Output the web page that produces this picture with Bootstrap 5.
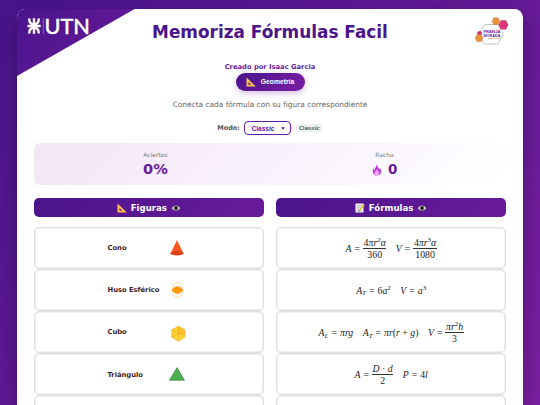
<!DOCTYPE html>
<html lang="es">
<head>
    <meta charset="UTF-8">
    <meta name="viewport" content="width=device-width, initial-scale=1.0">
    <title>Memoriza Fórmulas Facil</title>
    <link href="https://cdn.jsdelivr.net/npm/bootstrap@5.3.0/dist/css/bootstrap.min.css" rel="stylesheet">
    <style>
        body {
            height: 100vh;
            background: linear-gradient(135deg, #4a148c 0%, #7b1fa2 100%);
            font-family: "DejaVu Sans", Verdana, sans-serif;
            font-size: 7px;
            line-height: 1.2;
            color: #333;
        }
        svg { display: block; flex: none; overflow: visible; }
        .game-panel {
            width: 506px;
            height: calc(100vh - 8.5px);
            margin: 8.5px auto 0;
            padding: 0 17px;
            background: white;
            border-radius: 8.5px 8.5px 0 0;
            box-shadow: 0 8px 25px rgba(0,0,0,0.3);
        }
        .corner {
            width: 118.5px;
            height: 67.5px;
            background: linear-gradient(135deg, #4a148c, #6a1b9a);
            clip-path: polygon(0 0, 100% 0, 0 100%);
        }
        .utn-logo { left: 10px; top: 8.5px; }
        .franja-logo { right: 12.5px; top: 8px; }
        .game-title {
            font-size: 16.9px;
            line-height: 20px;
            padding-top: 13.5px;
            color: #4a148c;
        }
        .author { font-size: 6.75px; line-height: 8px; margin-top: 20.5px; color: #6a1b9a; }
        .btn-topic {
            width: 69px;
            height: 18px;
            margin-top: 2px;
            gap: 5px;
            border-radius: 10px;
            background: linear-gradient(135deg, #4a148c, #7b1fa2);
            box-shadow: 0 2px 6px rgba(106,27,154,0.3);
            font: bold 6.75px "Liberation Sans", Arial, sans-serif;
            color: white;
        }
        .intro { font-size: 7.42px; line-height: 9px; margin-top: 9.5px; color: #666; }
        .mode-row { height: 14px; margin-top: 12px; gap: 4.5px; font-size: 6.5px; color: #555; }
        .mode-row > span:first-child { padding-top: 1px; }
        .mode-select {
            width: 47px;
            height: 14px;
            padding: 0 5px 0 6px;
            border: 1px solid #6a1b9a;
            border-radius: 4px;
            font: bold 6.6px "Liberation Sans", Arial, sans-serif;
            color: #6a1b9a;
        }
        .mode-tag { padding: 1px 3px; border-radius: 4px; background: #f0f0f0; font-size: 5.4px; line-height: 6px; color: #666; }
        .stats {
            height: 42px;
            margin-top: 7.5px;
            padding: 0 7px;
            border-radius: 6px;
            background: linear-gradient(135deg, #f3e5f5 0%, #f9f2fd 50%, #ffffff 100%);
        }
        .stat { flex: 1 1 0; }
        .stat-name { font-size: 6px; line-height: 8px; margin-top: 8.5px; color: #777; }
        .stat-value { font-size: 13.5px; line-height: 17px; margin-top: 2px; gap: 6.5px; color: #6a1b9a; }
        .stat-percent { font-size: 14.6px; line-height: 16px; }
        .boards { display: grid; grid-template-columns: 1fr 1fr; gap: 12.6px; margin-top: 13px; }
        .board-head {
            height: 19.5px;
            gap: 4px;
            margin-bottom: 9.5px;
            padding-top: 1px;
            border-radius: 5px;
            background: linear-gradient(135deg, #4a148c, #6a1b9a);
            font-size: 8.6px;
            color: white;
        }
        .tile {
            height: 42px;
            margin-bottom: 0.2px;
            border: 1px solid #e0e0e0;
            box-shadow: inset 0 0 0 0.5px #e0e0e0;
            border-radius: 5px;
        }
        .tile-figure { padding-left: 72.5px; font-size: 6.75px; font-weight: bold; color: #3e1a1a; }
        .tile-figure > span { width: 58.3px; padding-top: 1px; white-space: nowrap; }
        .tile-figure > svg { width: 22px; height: 22px; }
        .math {
            gap: 9.4px;
            padding-top: 1px;
            font: italic 9.8px "Liberation Serif", "Times New Roman", serif;
            color: #222;
        }
        .math i, .math b { font-weight: normal; font-style: normal; }
        .math b { padding: 0 3px; }
        .math sup, .math sub { font-size: 7px; line-height: 0; }
        .math sup { top: -0.5em; font-style: normal; }
        .eq { display: flex; align-items: center; white-space: nowrap; }
        .frac { display: inline-flex; flex-direction: column; align-items: center; line-height: 11px; }
        .frac > span { padding: 0 0.6px; }
        .frac > span:first-child { border-bottom: 0.6px solid #333; }
    </style>
</head>
<body class="overflow-hidden">
    <main class="game-panel position-relative overflow-hidden">
        <div class="corner position-absolute top-0 start-0"></div>

        <div class="utn-logo position-absolute d-flex align-items-center">
            <svg width="70" height="22" viewBox="0 0 70 22">
                <g fill="none" stroke="#fff" stroke-width="2.4">
                    <path d="M7 1.2V16.8M.5 9H13.7"/>
                    <path d="M2.2 1.5c0 4 2.1 5.7 4.8 5.7s4.8-1.7 4.8-5.7M2.2 16.5c0-4 2.1-5.7 4.8-5.7s4.8 1.7 4.8 5.7"/>
                </g>
                <path d="M16.3 1V17" stroke="#c9afe0" stroke-width=".5"/>
                <text x="17.5" y="16.6" textLength="45.5" lengthAdjust="spacingAndGlyphs" font-family="Lato, sans-serif" font-size="21.5" fill="#fff" stroke="#fff" stroke-width=".5">UTN</text>
            </svg>
        </div>

        <div class="franja-logo position-absolute">
            <svg width="36" height="29" viewBox="0 0 36 29">
                <path d="M9.5 7.5H23L28.3 17.2L23 27H9.5L4 17.2Z" fill="#fff" stroke="#aaa" stroke-width=".7"/>
                <path d="M19 .7H23L25 4.2L23 7.8H19L17 4.2Z" fill="#eb9338" stroke="#a86b56" stroke-width=".4"/>
                <path d="M26 3.3H31L33.4 7.9L31 12.4H26L23.4 7.9Z" fill="#df3478"/>
                <path d="M3.2 14.2H6L7.4 16.2L6 18.2H3.2L2 16.2Z" fill="#d92b73"/>
                <path d="M2 17.5H6L8 21L6 24.6H2L.2 21Z" fill="#eb9338" stroke="#a86b56" stroke-width=".4"/>
                <g font-family="Liberation Sans, sans-serif" font-weight="bold" font-size="3.6" fill="#6a1b9a">
                    <text x="8.5" y="16.1" textLength="17" lengthAdjust="spacingAndGlyphs">FRANJA</text>
                    <text x="8.5" y="19.6" textLength="17" lengthAdjust="spacingAndGlyphs">MORADA</text>
                </g>
                <path d="M13 21.3H25" stroke="#f0a866" stroke-width=".8"/>
            </svg>
        </div>

        <h1 class="game-title fw-bold text-center mb-0">Memoriza Fórmulas Facil</h1>
        <div class="author fw-bold text-center">Creado por Isaac Garcia</div>
        <button type="button" class="btn-topic d-flex align-items-center justify-content-center border-0 mx-auto p-0">
            <svg width="10" height="10" viewBox="0 0 10 10"><path d="M.5.5V9.5H9.8ZM2.5 5L5.2 7.7H2.5Z" fill="#f9c04c" fill-rule="evenodd"/></svg>
            Geometría
        </button>
        <p class="intro text-center mb-0">Conecta cada fórmula con su figura correspondiente</p>

        <div class="mode-row d-flex align-items-center justify-content-center">
            <span class="fw-bold">Modo:</span>
            <div class="mode-select d-flex align-items-center justify-content-between">
                Classic
                <svg width="4" height="3" viewBox="0 0 4 3"><path d="M0 .3H4L2 2.8Z" fill="#6a1b9a"/></svg>
            </div>
            <span class="mode-tag fw-bold">Classic</span>
        </div>

        <section class="stats d-flex text-center">
            <div class="stat">
                <div class="stat-name">Aciertos</div>
                <div class="stat-value stat-percent fw-bold">0%</div>
            </div>
            <div class="stat">
                <div class="stat-name">Racha</div>
                <div class="stat-value fw-bold d-flex align-items-center justify-content-center">
                    <svg width="10" height="12" viewBox="0 0 10 12"><path d="M4.5 0C5 2.5 7 3.5 7.2 5.5L8 4C10.5 8 8.8 11.5 5 11.5S-.3 8.2 1.4 4.2L2.5 6C3 3.5 4.8 2.5 4.5 0Z" fill="#c13de0"/><path d="M5 5C5 6.8 7.4 7.4 7.4 9.2S6.4 11.5 5 11.5 2.3 10.8 2.3 9.2 4.5 7 5 5Z" fill="#eba6f7"/></svg>
                    0
                </div>
            </div>
        </section>

        <div class="boards">
            <section>
                <div class="board-head fw-bold d-flex align-items-center justify-content-center">
                    <svg width="10" height="10" viewBox="0 0 10 10"><path d="M.5.5V9.5H9.8ZM2.5 5L5.2 7.7H2.5Z" fill="#f9c04c" fill-rule="evenodd"/></svg>
                    Figuras
                    <svg width="10" height="8" viewBox="0 0 10 8"><path d="M.8 4.2C2.8 1 7.2 1 9.2 4.2C7.2 7.2 2.8 7.2.8 4.2Z" fill="#ddd" stroke="#8a7a90" stroke-width=".6"/><circle cx="5" cy="4.1" r="2.1" fill="#5d4037"/><circle cx="5" cy="4.1" r="1.1" fill="#171010"/></svg>
                </div>
                <div class="tile tile-figure d-flex align-items-center">
                    <span>Cono</span>
                    <svg viewBox="0 0 22 22"><path d="M11 3L4.5 16.5H17.5Z" fill="#ff5722"/><ellipse cx="11" cy="16.3" rx="6.7" ry="2.2" fill="#d84315"/></svg>
                </div>
                <div class="tile tile-figure d-flex align-items-center">
                    <span>Huso Esférico</span>
                    <svg viewBox="0 0 22 22"><ellipse cx="11.4" cy="11" rx="5.2" ry="7.5" fill="none" stroke="#ffb74d" stroke-width=".6"/><path d="M6 11Q11.4 3.8 17 11Q11.4 18.2 6 11Z" fill="#ff9800" stroke="#f57c00" stroke-width=".5"/></svg>
                </div>
                <div class="tile tile-figure d-flex align-items-center">
                    <span>Cubo</span>
                    <svg viewBox="0 0 22 22"><path d="M12.3 5.3L18.8 9V16.3L12.3 20L5.9 16.3V9Z" fill="#fdd835"/><path d="M12.3 5.3L18.8 9V14.5L12.3 12.3Z" fill="#fbc02d"/><path d="M12.3 5.3L18.8 9V16.3L12.3 20L5.9 16.3V9ZM5.9 9L18.8 14.5M12.3 5.3V20M5.9 16.3L12.3 12.3" fill="none" stroke="#f9a825" stroke-width=".8"/></svg>
                </div>
                <div class="tile tile-figure d-flex align-items-center">
                    <span>Triángulo</span>
                    <svg viewBox="0 0 22 22"><path d="M11 4.6L3.5 17.3H18.5Z" fill="#4caf50" stroke="#2e7d32" stroke-width=".6"/></svg>
                </div>
                <div class="tile tile-figure"></div>
            </section>

            <section>
                <div class="board-head fw-bold d-flex align-items-center justify-content-center">
                    <svg width="10" height="10" viewBox="0 0 10 10"><path d="M.5.5H8.5V9.5H.5Z" fill="#f3f0ed"/><path d="M2 2.5H7M2 4.3H6M2 6H5M2 7.8H7" stroke="#8fa5b4" stroke-width=".6"/><path d="M3.5 7.5L8.6 1L9.8 2L4.5 8.2Z" fill="#f9b52d"/><path d="M3.5 7.5L4.5 8.2L3.2 8.7Z" fill="#333"/></svg>
                    Fórmulas
                    <svg width="10" height="8" viewBox="0 0 10 8"><path d="M.8 4.2C2.8 1 7.2 1 9.2 4.2C7.2 7.2 2.8 7.2.8 4.2Z" fill="#ddd" stroke="#8a7a90" stroke-width=".6"/><circle cx="5" cy="4.1" r="2.1" fill="#5d4037"/><circle cx="5" cy="4.1" r="1.1" fill="#171010"/></svg>
                </div>
                <div class="tile math d-flex align-items-center justify-content-center">
                    <span class="eq">A<b>=</b><span class="frac"><span><i>4</i>πr<sup>2</sup>α</span><span><i>360</i></span></span></span>
                    <span class="eq">V<b>=</b><span class="frac"><span><i>4</i>πr<sup>3</sup>α</span><span><i>1080</i></span></span></span>
                </div>
                <div class="tile math d-flex align-items-center justify-content-center">
                    <span class="eq"><span>A<sub>T</sub></span><b>=</b><span><i>6</i>a<sup>2</sup></span></span>
                    <span class="eq">V<b>=</b><span>a<sup>3</sup></span></span>
                </div>
                <div class="tile math d-flex align-items-center justify-content-center">
                    <span class="eq"><span>A<sub>L</sub></span><b>=</b>πrg</span>
                    <span class="eq"><span>A<sub>T</sub></span><b>=</b><span>πr<i>(</i>r<i> + </i>g<i>)</i></span></span>
                    <span class="eq">V<b>=</b><span class="frac"><span>πr<sup>2</sup>h</span><span><i>3</i></span></span></span>
                </div>
                <div class="tile math d-flex align-items-center justify-content-center">
                    <span class="eq">A<b>=</b><span class="frac"><span>D<i> · </i>d</span><span><i>2</i></span></span></span>
                    <span class="eq">P<b>=</b><span><i>4</i>l</span></span>
                </div>
                <div class="tile math"></div>
            </section>
        </div>
    </main>

    <script src="https://cdn.jsdelivr.net/npm/bootstrap@5.3.0/dist/js/bootstrap.bundle.min.js"></script>
</body>
</html>
